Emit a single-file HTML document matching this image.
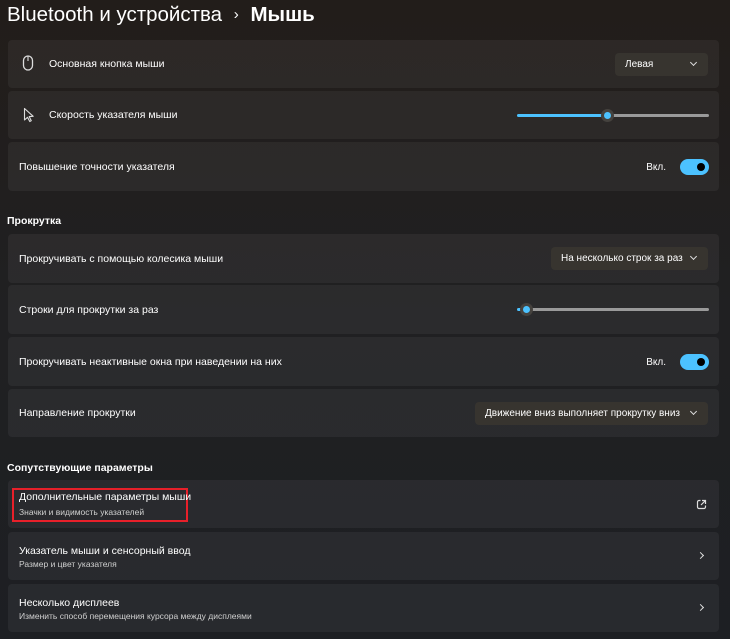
<!DOCTYPE html>
<html><head><meta charset="utf-8"><style>
*{margin:0;padding:0;box-sizing:border-box}
body{width:730px;height:639px;overflow:hidden;background:linear-gradient(180deg,#221d1a 0%,#202022 50%,#1d1f23 100%);font-family:"Liberation Sans","Noto Sans CJK SC",sans-serif;color:#fff;position:relative}
.t{position:absolute;left:7px;top:3px;font-size:20.5px;white-space:nowrap}
.t b{font-weight:600}
.h{position:absolute;left:7px;font-size:10.5px;font-weight:bold}
.c{position:absolute;left:8px;width:711px;border-radius:4px;background:rgba(255,255,255,0.05)}
.l{position:absolute;left:11px;font-size:10.5px;white-space:nowrap}
.s{position:absolute;left:11px;font-size:8.5px;color:#d0d0d0;white-space:nowrap}
.dd{position:absolute;right:11px;top:13px;height:23px;border-radius:4px;background:#37342f;font-size:10px;padding:6px 0 0 10px}
.dd:after{content:"";position:absolute;right:12px;top:7px;width:4px;height:4px;border-right:1px solid #ddd;border-bottom:1px solid #ddd;transform:rotate(45deg)}
.tg{position:absolute;right:10px;top:17px;width:29px;height:16px;border-radius:8px;background:#4cc2ff}
.tg:after{content:"";position:absolute;right:4px;top:4px;width:8px;height:8px;border-radius:50%;background:#000}
.vk{position:absolute;right:53px;top:20px;font-size:10px}
.tr{position:absolute;top:23px;height:3px;border-radius:2px;background:#9a9a9a}
.tf{position:absolute;top:23px;height:3px;border-radius:2px;background:#4cc2ff}
.th{position:absolute;top:18px;width:13px;height:13px;border-radius:50%;background:#45423e}
.th:after{content:"";position:absolute;left:3px;top:3px;width:7px;height:7px;border-radius:50%;background:#4cc2ff}
.ch{position:absolute;right:16px;top:21px;width:5px;height:5px;border-right:1.3px solid #ddd;border-top:1.3px solid #ddd;transform:rotate(45deg)}
</style></head><body>
<div class="t">Bluetooth и устройства <span style="font-size:15px;margin:0 6px;position:relative;top:-2px">›</span> <b>Мышь</b></div>

<div class="c" style="top:40px;height:48px">
<svg style="position:absolute;left:14px;top:15px" width="12" height="17" viewBox="0 0 12 17"><rect x="1.5" y="1" width="9" height="14" rx="4.5" fill="none" stroke="#ddd" stroke-width="1.3"/><line x1="6" y1="1" x2="6" y2="6" stroke="#ddd" stroke-width="1.1"/></svg>
<div class="l" style="left:41px;top:18px">Основная кнопка мыши</div>
<div class="dd" style="width:93px">Левая</div></div>

<div class="c" style="top:91px;height:48px">
<svg style="position:absolute;left:15px;top:16px" width="12" height="16" viewBox="0 0 12 16"><path d="M1.5 1.5 L1.5 13 L4.5 10.3 L6.8 14.5 L8.3 13.7 L6.2 9.6 L10.2 9.3 Z" fill="none" stroke="#ddd" stroke-width="1.1" stroke-linejoin="round"/></svg>
<div class="l" style="left:41px;top:18px">Скорость указателя мыши</div>
<div class="tf" style="left:509px;width:92px"></div><div class="tr" style="left:603px;width:98px"></div>
<div class="th" style="left:593px"></div></div>

<div class="c" style="top:142px;height:49px">
<div class="l" style="top:19px">Повышение точности указателя</div>
<div class="vk">Вкл.</div><div class="tg"></div></div>

<div class="h" style="top:215px">Прокрутка</div>

<div class="c" style="top:234px;height:49px">
<div class="l" style="top:19px">Прокручивать с помощью колесика мыши</div>
<div class="dd" style="width:157px">На несколько строк за раз</div></div>

<div class="c" style="top:285px;height:49px">
<div class="l" style="top:19px">Строки для прокрутки за раз</div>
<div class="tf" style="left:509px;width:6px"></div><div class="tr" style="left:523px;width:178px"></div>
<div class="th" style="left:512px"></div></div>

<div class="c" style="top:337px;height:49px">
<div class="l" style="top:19px">Прокручивать неактивные окна при наведении на них</div>
<div class="vk">Вкл.</div><div class="tg"></div></div>

<div class="c" style="top:389px;height:48px">
<div class="l" style="top:18px">Направление прокрутки</div>
<div class="dd" style="width:233px">Движение вниз выполняет прокрутку вниз</div></div>

<div class="h" style="top:462px">Сопутствующие параметры</div>

<div class="c" style="top:480px;height:48px">
<div style="position:absolute;left:4px;top:8px;width:176px;height:34px;border:2px solid #e8202a"></div>
<div class="l" style="top:11px">Дополнительные параметры мыши</div>
<div class="s" style="top:27px">Значки и видимость указателей</div>
<svg style="position:absolute;right:12px;top:19px" width="11" height="11" viewBox="0 0 11 11"><path d="M4.5 1.5H3A1.5 1.5 0 0 0 1.5 3v5A1.5 1.5 0 0 0 3 9.5h5A1.5 1.5 0 0 0 9.5 8V6.5M6 1.5h3.5V5M9.5 1.5L5 6" fill="none" stroke="#ddd" stroke-width="1.2"/></svg></div>

<div class="c" style="top:532px;height:48px">
<div class="l" style="top:13px">Указатель мыши и сенсорный ввод</div>
<div class="s" style="top:27px">Размер и цвет указателя</div><div class="ch"></div></div>

<div class="c" style="top:584px;height:48px">
<div class="l" style="top:13px">Несколько дисплеев</div>
<div class="s" style="top:27px">Изменить способ перемещения курсора между дисплеями</div><div class="ch"></div></div>
</body></html>
